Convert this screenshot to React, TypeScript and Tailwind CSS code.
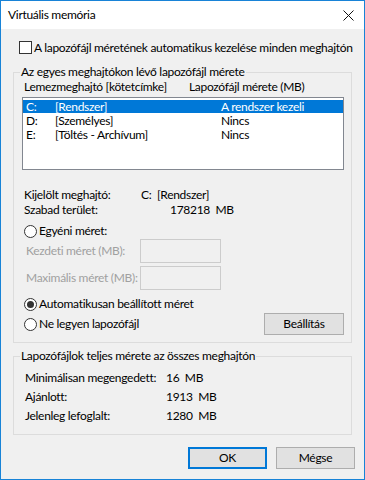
import React from "react";

function Radio({ checked }: { checked?: boolean }) {
  return (
    <span className="w-[13px] h-[13px] rounded-full border border-[#333] bg-white flex items-center justify-center shrink-0">
      {checked && <span className="w-[7px] h-[7px] rounded-full bg-[#333]" />}
    </span>
  );
}

function Btn({ label, primary }: { label: string; primary?: boolean }) {
  return (
    <button
      className={
        primary
          ? "w-[79px] h-[22px] bg-[#e1e1e1] border-2 border-[#0078d7] text-[12px] leading-none text-black"
          : "w-[79px] h-[22px] bg-[#e1e1e1] border border-[#adadad] text-[12px] leading-none text-black"
      }
    >
      {label}
    </button>
  );
}

const drives = [
  { letter: "C:", label: "[Rendszer]", size: "A rendszer kezeli", selected: true },
  { letter: "D:", label: "[Személyes]", size: "Nincs" },
  { letter: "E:", label: "[Töltés - Archívum]", size: "Nincs" },
];

const totals = [
  { name: "Minimálisan megengedett:", value: "16  MB" },
  { name: "Ajánlott:", value: "1913  MB" },
  { name: "Jelenleg lefoglalt:", value: "1280  MB" },
];

export default function App() {
  return (
    <div
      className="w-[365px] h-[480px] border border-[#1883d7] flex flex-col text-[12px] tracking-[-0.3px] text-black whitespace-pre"
      style={{ fontFamily: 'Lato, "Noto Sans", sans-serif' }}
    >
      {/* Title bar */}
      <div className="h-[28px] bg-white flex items-center justify-between pl-[7px] pr-[10px]">
        <span>Virtuális memória</span>
        <svg width="11" height="11" viewBox="0 0 11 11">
          <path d="M0.5 0.5 L10.5 10.5 M10.5 0.5 L0.5 10.5" stroke="#111" strokeWidth="1" />
        </svg>
      </div>

      <div className="flex-1 bg-[#f0f0f0] px-[12px] pt-[12px]">
        <div className="h-[13px] flex items-center pl-[6px] gap-[2px]">
          <span className="w-[13px] h-[13px] border border-[#333] bg-white shrink-0" />
          <span>A lapozófájl méretének automatikus kezelése minden meghajtón</span>
        </div>

        {/* Per-drive group */}
        <fieldset className="mt-[10px] border border-[#dcdcdc] pb-[7px]">
          <legend className="ml-[6px] px-[1px] leading-[16px]">Az egyes meghajtókon lévő lapozófájl mérete</legend>
          <div className="h-[14px] flex items-center pl-[10px]">
            <span className="w-[165px]">Lemezmeghajtó [kötetcímke]</span>
            <span>Lapozófájl mérete (MB)</span>
          </div>
          <div className="mt-[3px] ml-[8px] w-[322px] h-[73px] border border-[#828790] bg-white py-[2px] px-[0px]">
            {drives.map((d) => (
              <div
                key={d.letter}
                className={
                  d.selected
                    ? "h-[13px] mb-[1px] flex items-center pl-[3px] bg-[#0078d7] text-white"
                    : "h-[13px] mb-[1px] flex items-center pl-[3px]"
                }
              >
                <span className="w-[29px]">{d.letter}</span>
                <span className="w-[166px]">{d.label}</span>
                <span>{d.size}</span>
              </div>
            ))}
          </div>

          <div className="mt-[17px] h-[15px] flex items-center pl-[10px]">
            <span className="w-[117px]">Kijelölt meghajtó:</span>
            <span>C:  [Rendszer]</span>
          </div>
          <div className="h-[15px] flex items-center pl-[10px]">
            <span className="w-[146px]">Szabad terület:</span>
            <span>178218  MB</span>
          </div>

          <div className="mt-[6px] h-[16px] flex items-center pl-[10px] gap-[2px]">
            <Radio />
            <span>Egyéni méret:</span>
          </div>
          <div className="h-[24px] flex items-center pl-[12px] text-[#a0a0a0]">
            <span className="w-[114px]">Kezdeti méret (MB):</span>
            <span className="w-[81px] h-[24px] border border-[#cccccc] bg-[#f0f0f0]" />
          </div>
          <div className="mt-[3px] h-[24px] flex items-center pl-[12px] text-[#a0a0a0]">
            <span className="w-[114px]">Maximális méret (MB):</span>
            <span className="w-[81px] h-[24px] border border-[#cccccc] bg-[#f0f0f0]" />
          </div>

          <div className="mt-[6px] h-[16px] flex items-center pl-[10px] gap-[2px]">
            <Radio checked />
            <span>Automatikusan beállított méret</span>
          </div>
          <div className="mt-[1px] h-[22px] flex items-center justify-between pl-[10px] pr-[7px]">
            <div className="flex items-center gap-[2px]">
              <Radio />
              <span>Ne legyen lapozófájl</span>
            </div>
            <button className="w-[80px] h-[22px] bg-[#e1e1e1] border border-[#adadad] leading-none">Beállítás</button>
          </div>
        </fieldset>

        {/* Totals group */}
        <fieldset className="mt-[5px] border border-[#dcdcdc] pb-[9px]">
          <legend className="ml-[6px] px-[1px] leading-[16px]">Lapozófájlok teljes mérete az összes meghajtón</legend>
          <div className="mt-[4px]">
            {totals.map((t) => (
              <div key={t.name} className="h-[19px] flex items-center pl-[11px]">
                <span className="w-[141px]">{t.name}</span>
                <span>{t.value}</span>
              </div>
            ))}
          </div>
        </fieldset>

        <div className="mt-[12px] flex justify-end gap-[9px] -mr-[3px]">
          <Btn label="OK" primary />
          <Btn label="Mégse" />
        </div>
      </div>
    </div>
  );
}
